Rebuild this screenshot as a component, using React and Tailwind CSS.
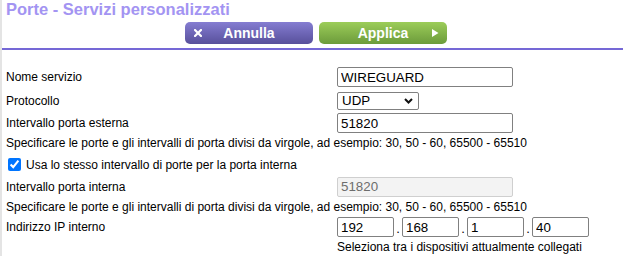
export default function App() {
  const inputCls =
    "h-[20px] border border-[#808080] rounded-[2px] bg-white px-[3px] text-[13.33px] leading-[18px] text-black outline-none";
  return (
    <div className="flex min-h-[256px] bg-white font-['Liberation_Sans',Arial,sans-serif] text-black">
      <div className="w-[2px] shrink-0 bg-[#e4e4e4]" />
      <div className="flex-1">
        <div className="h-[20px] pl-[4px] text-[16.5px] font-bold leading-[19px] text-[#a394f2]">
          Porte - Servizi personalizzati
        </div>
        <div className="mt-[2px] flex gap-[6px] pl-[183px]">
          <button className="relative flex h-[22px] w-[128px] items-center justify-center rounded-[5px] bg-gradient-to-b from-[#857dd2] to-[#58509b] text-[14px] font-bold leading-none text-white">
            <svg className="absolute left-[9px] top-[7px]" width="8" height="8" viewBox="0 0 8 8">
              <path d="M1 1 L7 7 M7 1 L1 7" stroke="white" strokeWidth="2.2" strokeLinecap="square" />
            </svg>
            Annulla
          </button>
          <button className="relative flex h-[22px] w-[128px] items-center justify-center rounded-[5px] bg-gradient-to-b from-[#9ccd59] to-[#6c9b3b] text-[14px] font-bold leading-none text-white">
            Applica
            <svg className="absolute left-[113px] top-[7px]" width="7" height="8" viewBox="0 0 7 8">
              <path d="M0 0 L6.5 4 L0 8 Z" fill="white" />
            </svg>
          </button>
        </div>
        <div className="mt-[4px] h-[2px] bg-[#7568d6]" />

        <div className="mt-[16px] text-[12px]">
          <div className="flex h-[22px] items-center">
            <div className="w-[335px] pl-[4px]">Nome servizio</div>
            <input className={`${inputCls} w-[176px]`} defaultValue="WIREGUARD" />
          </div>
          <div className="flex h-[25px] items-center">
            <div className="w-[335px] pl-[4px]">Protocollo</div>
            <div className="relative">
              <select
                className="h-[18px] w-[82px] appearance-none rounded-[2px] border border-[#808080] bg-white pl-[4px] text-[13.33px] leading-[16px] text-black outline-none"
                defaultValue="UDP"
              >
                <option>TCP</option>
                <option>UDP</option>
                <option>TCP/UDP</option>
              </select>
              <svg className="pointer-events-none absolute right-[6px] top-[6px]" width="9" height="6" viewBox="0 0 9 6">
                <path d="M1 1 L4.5 4.5 L8 1" fill="none" stroke="#111" strokeWidth="2" />
              </svg>
            </div>
          </div>
          <div className="flex h-[20px] items-center">
            <div className="w-[335px] pl-[4px]">Intervallo porta esterna</div>
            <input className={`${inputCls} w-[176px]`} defaultValue="51820" />
          </div>
          <div className="flex h-[20px] items-center pl-[4px]">
            Specificare le porte e gli intervalli di porta divisi da virgole, ad esempio: 30, 50 - 60, 65500 - 65510
          </div>
          <div className="flex h-[23px] items-center">
            <input
              type="checkbox"
              defaultChecked
              className="ml-[6px] mr-[5px] h-[13px] w-[13px] accent-[#0075ff]"
            />
            <span>Usa lo stesso intervallo di porte per la porta interna</span>
          </div>
          <div className="flex h-[21px] items-center">
            <div className="w-[335px] pl-[4px]">Intervallo porta interna</div>
            <input
              disabled
              className="h-[20px] w-[176px] rounded-[2px] border border-[#cfcfcf] bg-[#f3f3f3] px-[3px] text-[13.33px] leading-[18px] text-[#6d6d6d] outline-none"
              defaultValue="51820"
            />
          </div>
          <div className="flex h-[19px] items-center pl-[4px]">
            Specificare le porte e gli intervalli di porta divisi da virgole, ad esempio: 30, 50 - 60, 65500 - 65510
          </div>
          <div className="flex h-[22px] items-center">
            <div className="w-[335px] pl-[4px]">Indirizzo IP interno</div>
            <div className="flex items-end">
              <input className={`${inputCls} w-[57px]`} defaultValue="192" />
              <span className="w-[8px] text-center text-[13px] leading-[16px]">.</span>
              <input className={`${inputCls} w-[57px]`} defaultValue="168" />
              <span className="w-[8px] text-center text-[13px] leading-[16px]">.</span>
              <input className={`${inputCls} w-[57px]`} defaultValue="1" />
              <span className="w-[8px] text-center text-[13px] leading-[16px]">.</span>
              <input className={`${inputCls} w-[57px]`} defaultValue="40" />
            </div>
          </div>
          <div className="flex h-[18px] items-center">
            <div className="w-[335px]" />
            <span>Seleziona tra i dispositivi attualmente collegati</span>
          </div>
        </div>
      </div>
    </div>
  );
}
